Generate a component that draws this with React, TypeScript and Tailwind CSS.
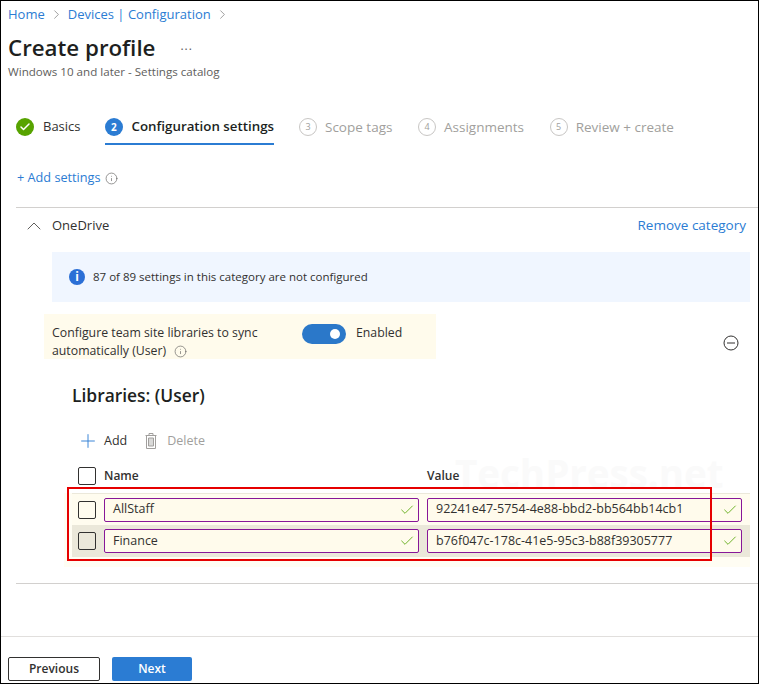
import React from "react";
import { Check, ChevronRight, ChevronUp, Info, Plus } from "lucide-react";

const font = "font-['Open_Sans','Noto_Sans',sans-serif]";

const steps = [
  { n: "3", label: "Scope tags" },
  { n: "4", label: "Assignments" },
  { n: "5", label: "Review + create" },
];

const rows = [
  { name: "AllStaff", value: "92241e47-5754-4e88-bbd2-bb564bb14cb1", bg: "border-t border-[#ebe8da]" },
  { name: "Finance", value: "b76f047c-178c-41e5-95c3-b88f39305777", bg: "bg-[#ebe8da]" },
];

function TextBox({ text, width }: { text: string; width: string }) {
  return (
    <div className={`${width} h-6 flex items-center justify-between pl-[8px] pr-[3px] bg-[#fffbec] border border-[#881798] rounded-[2px] text-[12.5px] text-[#323130]`}>
      <span>{text}</span>
      <Check className="w-4 h-4 text-[#6fb32a]" strokeWidth={1.5} />
    </div>
  );
}

function Box() {
  return <div className="w-[18px] h-[18px] border border-[#323130] rounded-[2px] shrink-0" />;
}

export default function App() {
  return (
    <div className={`${font} relative w-[759px] h-[684px] overflow-hidden bg-white border border-black text-[#323130]`}>
      <div className="h-[27px] pl-[7px] flex items-center gap-[4px] text-[13px] text-[#2b7cd3]">
        <span>Home</span>
        <ChevronRight className="w-[15px] h-[15px] text-[#666]" strokeWidth={1} />
        <span>Devices | Configuration</span>
        <ChevronRight className="w-[15px] h-[15px] text-[#666]" strokeWidth={1} />
      </div>

      <div className="h-[34px] pt-[6px] pl-[7px] flex items-center text-[22.3px] font-semibold text-[#201f1e]">
        Create profile
        <span className="ml-[25px] -mt-[4px] text-[12px] font-normal text-[#605e5c] tracking-[1px]">...</span>
      </div>
      <div className="h-[20px] pl-[7px] flex items-center text-[11.6px] text-[#605e5c]">
        Windows 10 and later - Settings catalog
      </div>

      <div className="mt-[27px] h-[36px] pl-[15px] flex items-center text-[13px]">
        <div className="w-[18px] h-[18px] rounded-full bg-[#57a300] flex items-center justify-center">
          <Check className="w-3 h-3 text-white" strokeWidth={3} />
        </div>
        <span className="ml-[9px] w-[62px]">Basics</span>
        <div className="h-full w-[169px] pt-[2px] flex items-center border-b-2 border-[#2b7cd3]">
          <div className="w-[18px] h-[18px] rounded-full bg-[#2b7cd3] flex items-center justify-center text-[10px] font-bold text-white">2</div>
          <span className="ml-[9px] text-[13.3px] font-semibold text-[#201f1e] whitespace-nowrap">Configuration settings</span>
        </div>
        <div className="ml-[25px] flex items-center gap-[25.6px] text-[13.5px] text-[#a19f9d]">
          {steps.map((s) => (
            <div key={s.n} className="flex items-center">
              <div className="w-[18px] h-[18px] rounded-full border border-[#c8c6c4] flex items-center justify-center text-[9px]">{s.n}</div>
              <span className="ml-[8px] whitespace-nowrap">{s.label}</span>
            </div>
          ))}
        </div>
      </div>

      <div className="mt-[23px] h-[20px] pl-[16px] flex items-center text-[12.7px] text-[#2b7cd3]">
        + Add settings
        <Info className="ml-[4px] w-[13px] h-[13px] text-[#605e5c]" strokeWidth={1.2} />
      </div>

      <div className="mt-[19px] ml-[15px] border-t border-[#d2d0ce]">
        <div className="h-[35px] flex items-center justify-between pr-[12px] text-[13px]">
          <div className="flex items-center">
            <ChevronUp className="ml-[6px] w-[24px] h-[24px] text-[#605e5c]" strokeWidth={1} />
            <span className="ml-[6px]">OneDrive</span>
          </div>
          <span className="text-[13.5px] text-[#2b7cd3]">Remove category</span>
        </div>
        <div className="mt-[9px] ml-[36px] mr-[8px] h-[50px] bg-[#f0f6ff] flex items-center pl-[17px] text-[11.5px]">
          <div className="w-4 h-4 rounded-full bg-[#2b6fd6] flex items-center justify-center text-white text-[12px] font-bold">i</div>
          <span className="ml-[8px]">87 of 89 settings in this category are not configured</span>
        </div>

        <div className="mt-[12px] flex items-start justify-between pr-[19px]">
          <div className="ml-[28px] w-[392px] h-[45px] bg-[#fffbec] flex pl-[8px] text-[12.3px] leading-[18px] pt-[10px]">
            <div className="w-[250px]">
              Configure team site libraries to sync
              <div className="flex items-center">
                automatically (User)
                <Info className="ml-[8px] w-[13px] h-[13px] text-[#605e5c]" strokeWidth={1.2} />
              </div>
            </div>
            <div className="w-[44px] h-[20px] rounded-full bg-[#2b78c9] flex items-center justify-end pr-[6px]">
              <div className="w-[10px] h-[10px] rounded-full bg-white" />
            </div>
            <span className="ml-[10px]">Enabled</span>
          </div>
          <svg className="mt-[21px] w-4 h-4 text-[#323130]" viewBox="0 0 16 16" fill="none" stroke="currentColor">
            <circle cx="8" cy="8" r="7" />
            <path d="M4 8h8" />
          </svg>
        </div>

        <div className="mt-[25px] ml-[56px] h-[22px] flex items-center text-[17.4px] font-semibold text-[#201f1e]">Libraries: (User)</div>

        <div className="mt-[24px] ml-[61px] h-[22px] flex items-center text-[12.5px]">
          <Plus className="w-[22px] h-[22px] text-[#2b7cd3]" strokeWidth={1} />
          <span className="ml-[5px]">Add</span>
          <svg className="ml-[17px] w-[14px] h-[18px] text-[#a19f9d]" viewBox="0 0 14 18" fill="none" stroke="currentColor">
            <path d="M1.5 3.5h11M5 3.5V1.5h4v2M2.5 3.5v13h9v-13" />
            <path d="M4.5 6v8h5V6z" fill="currentColor" fillOpacity="0.4" />
          </svg>
          <span className="ml-[9px] text-[#a19f9d]">Delete</span>
        </div>

        <div className="mt-[11px] ml-[62px] h-[26px] flex items-center text-[12px] font-semibold">
          <Box />
          <span className="ml-[8px] w-[323px]">Name</span>
          <span>Value</span>
        </div>

        <div className="mt-[4px] ml-[48px] mr-[8px] pb-[10px] bg-[#fffdf3]">
          <div className="ml-[8px] bg-[#fffcef]">
            {rows.map((r) => (
              <div key={r.name} className={`${r.bg} h-8 flex items-center pl-[6px]`}>
                <Box />
                <div className="ml-[8px]"><TextBox text={r.name} width="w-[315px]" /></div>
                <div className="ml-[8px]"><TextBox text={r.value} width="w-[315px]" /></div>
              </div>
            ))}
          </div>
        </div>

        <div className="mt-[16px] border-t border-[#d2d0ce]" />
      </div>

      <div className="mt-[52px] border-t border-[#e1dfdd] pt-[20px] pl-[7px] flex gap-3 text-[12px] font-semibold">
        <div className="w-[92px] h-6 flex items-center justify-center border border-[#323130] rounded-[2px]">Previous</div>
        <div className="w-[80px] h-6 flex items-center justify-center bg-[#2b7cd3] rounded-[2px] text-white">Next</div>
      </div>

      <div className="absolute left-[454px] top-[444px] text-[38.5px] font-bold text-[#fafafa] pointer-events-none">TechPress.net</div>
      <div className="absolute left-[66px] top-[486px] w-[645px] h-[74px] border-2 border-[#e60000] pointer-events-none" />
    </div>
  );
}
